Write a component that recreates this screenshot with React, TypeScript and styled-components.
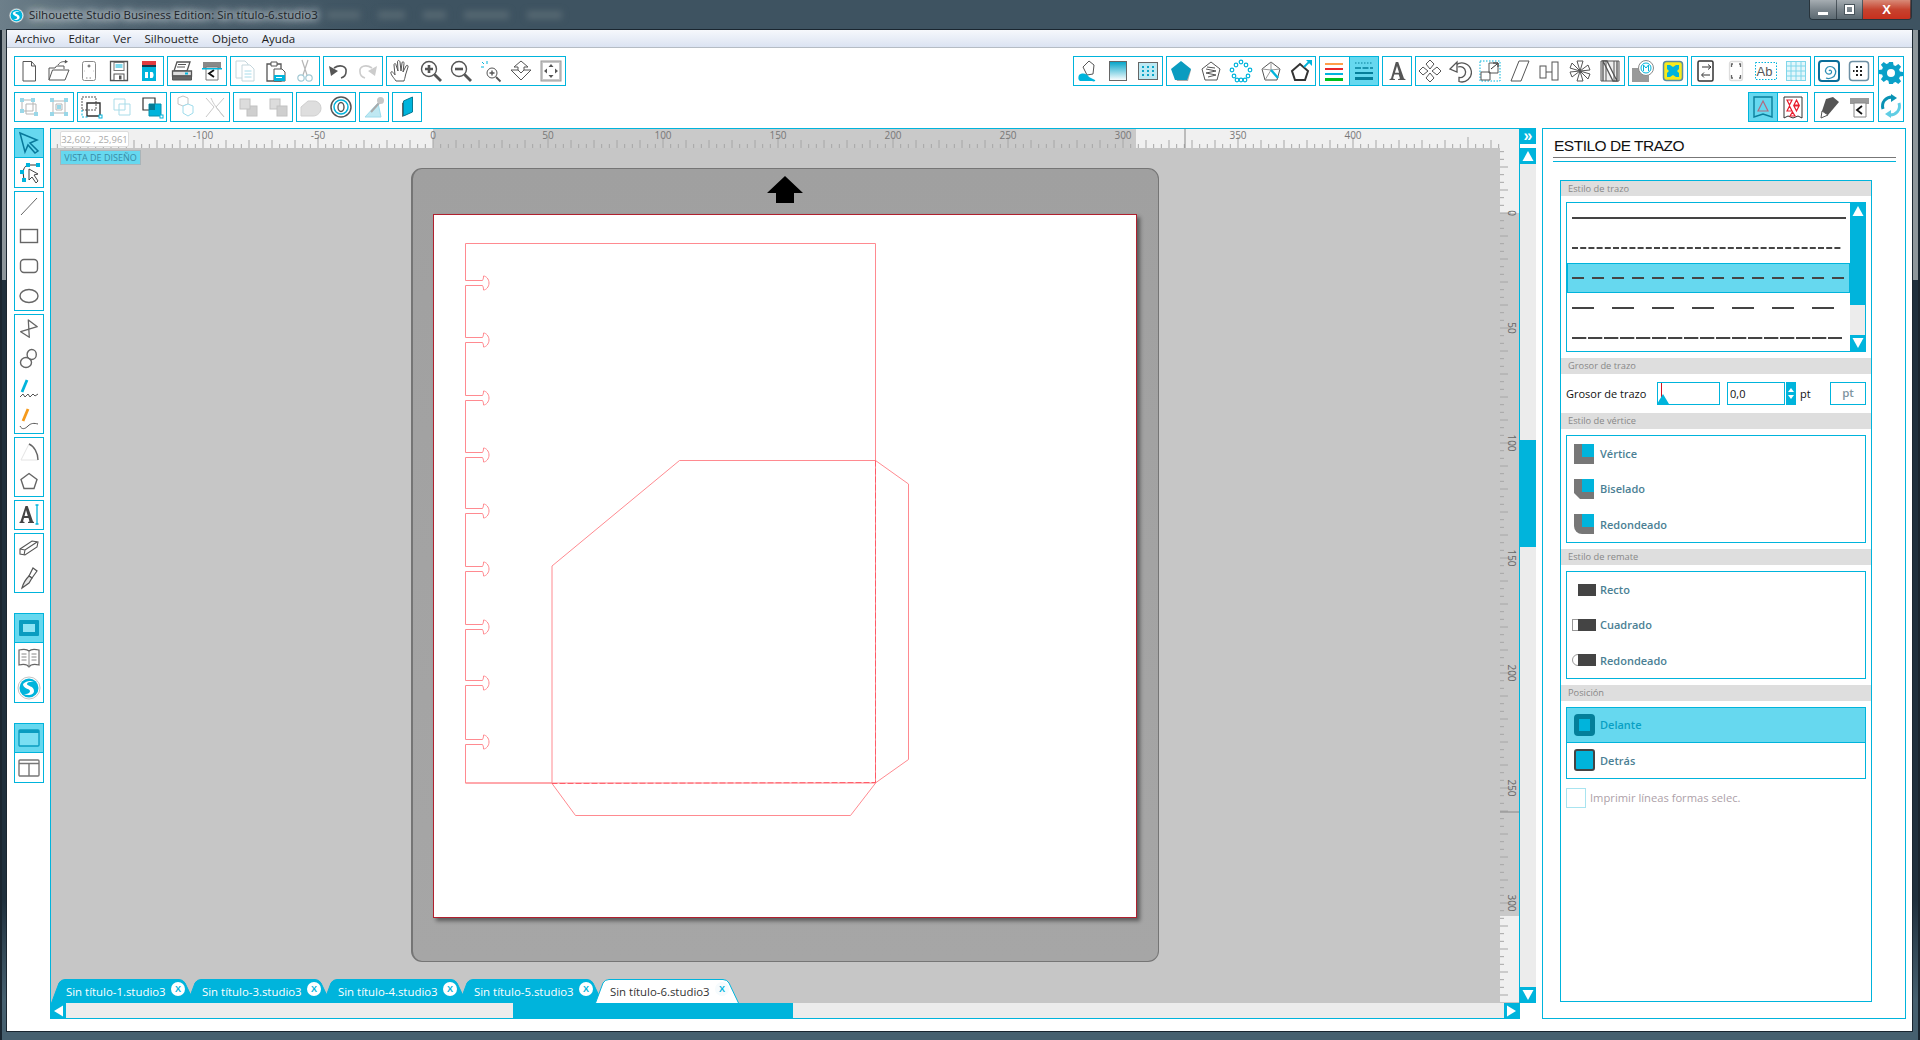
import React from 'react';
import styled, { createGlobalStyle } from 'styled-components';

const CYAN = '#00b4dc';
const ACTIVE = '#66d8ef';
const INK = '#555';
const UI_FONT = '"Open Sans", "Noto Sans", "Liberation Sans", sans-serif';

const Global = createGlobalStyle`
  html, body { margin: 0; padding: 0; background: #3d5260; }
  * { box-sizing: border-box; }
`;

const Window = styled.div`
  width: 1920px;
  height: 1040px;
  overflow: hidden;
  display: flex;
  flex-direction: column;
  font-family: ${UI_FONT};
  background:
    linear-gradient(90deg, #1a2630 0 2px, transparent 2px 1918px, #1a2630 1918px),
    linear-gradient(180deg, #3d5260 0 30px, #8d969b 30px 280px, #1f303d 280px 900px, #46606f 1000px);
`;

const TitleBar = styled.header`
  height: 30px;
  flex: none;
  display: flex;
  align-items: flex-start;
  padding: 0 8px 0 9px;
  background: linear-gradient(90deg, #6d7f8a 0, #4d616e 120px, #3e5361 400px);
`;

const TitleLogo = styled.svg`
  width: 15px;
  height: 15px;
  margin-top: 8px;
  flex: none;
`;

const TitleText = styled.span`
  margin: 7px 0 0 5px;
  font-size: 11.5px;
  line-height: 16px;
  color: #1d2328;
  white-space: nowrap;
  text-shadow: 0 0 6px #e9eef1, 0 0 10px #e9eef1, 0 0 14px #d4dce0;
`;

const GlassBlobs = styled.div`
  display: flex;
  gap: 18px;
  margin: 11px 0 0 9px;
`;

const GlassBlob = styled.span<{ $w: number }>`
  width: ${(p) => p.$w}px;
  height: 8px;
  background: #566872;
  filter: blur(3px);
`;

const WindowButtons = styled.div`
  margin-left: auto;
  display: flex;
  height: 20px;
  border: 1px solid #28343c;
  border-top: none;
  border-radius: 0 0 4px 4px;
  overflow: hidden;
`;

const WindowButton = styled.div<{ $w: number; $close?: boolean }>`
  width: ${(p) => p.$w}px;
  display: flex;
  align-items: center;
  justify-content: center;
  color: #fff;
  font-family: "Liberation Sans", sans-serif;
  font-size: 13px;
  font-weight: 700;
  border-right: 1px solid rgba(30, 40, 48, 0.6);
  background: ${(p) =>
    p.$close
      ? 'linear-gradient(180deg, #d88a78 0, #c6432f 50%, #c8301e 100%)'
      : 'linear-gradient(180deg, #a6adb2 0, #7b858c 50%, #5b6971 100%)'};
`;

const MinGlyph = styled.span`
  width: 10px;
  height: 3px;
  margin-top: 7px;
  background: #fff;
`;

const MaxGlyph = styled.span`
  width: 9px;
  height: 9px;
  border: 2px solid #fff;
  outline: 1px solid #49555c;
`;

const Client = styled.main`
  flex: 1;
  min-height: 0;
  margin: 0 8px 9px 7px;
  background: #fff;
  display: flex;
  flex-direction: column;
  box-shadow: 0 0 0 1px #1a2630;
`;

const MenuBar = styled.nav`
  height: 18px;
  flex: none;
  display: flex;
  gap: 13.3px;
  padding-left: 8px;
  align-items: center;
  background: linear-gradient(180deg, #f6f8fc 0, #dbe3f2 100%);
  border-bottom: 1px solid #b5bcc4;
  font-size: 11.5px;
  color: #1b1b1b;
`;

const ToolbarArea = styled.section`
  flex: none;
  display: flex;
  justify-content: space-between;
  padding: 8px 8px 0 7px;
`;

const ToolRows = styled.div`
  display: flex;
  flex-direction: column;
  gap: 6px;
`;

const ToolRow = styled.div<{ $end?: boolean }>`
  display: flex;
  gap: 3px;
  justify-content: ${(p) => (p.$end ? 'flex-end' : 'flex-start')};
`;

const ToolRight = styled.div`
  display: flex;
  gap: 4px;
`;

const ToolGroup = styled.div<{ $col?: boolean; $mt?: number; $ml?: number }>`
  display: flex;
  flex-direction: ${(p) => (p.$col ? 'column' : 'row')};
  box-shadow: inset 0 0 0 1px ${CYAN};
  margin-top: ${(p) => p.$mt ?? 0}px;
  margin-left: ${(p) => p.$ml ?? 0}px;
  width: fit-content;
`;

const ToolButton = styled.div<{ $active?: boolean; $w?: number; $h?: number }>`
  width: ${(p) => p.$w ?? 30}px;
  height: ${(p) => p.$h ?? 30}px;
  flex: none;
  display: flex;
  align-items: center;
  justify-content: center;
  background: ${(p) => (p.$active ? ACTIVE : 'transparent')};
  box-shadow: ${(p) => (p.$active ? `inset 0 0 0 1px ${CYAN}` : 'none')};
`;

const Glyph = styled.svg`
  width: 24px;
  height: 24px;
  display: block;
`;

const Workspace = styled.div`
  flex: 1;
  min-height: 0;
  display: flex;
  gap: 6px;
  padding: 6px 6px 12px 7px;
`;

const ToolColumn = styled.aside`
  width: 30px;
  flex: none;
  display: flex;
  flex-direction: column;
  gap: 3px;
`;

const Editor = styled.div`
  width: 1486px;
  flex: none;
  display: flex;
  flex-direction: column;
`;

const EditorTop = styled.div`
  flex: 1;
  min-height: 0;
  display: flex;
`;

const Stage = styled.div`
  flex: 1;
  min-width: 0;
  display: flex;
  flex-direction: column;
  position: relative;
  background: #c6c6c6;
  border-left: 1px solid ${CYAN};
  border-top: 1px solid ${CYAN};
`;

const RulerSvg = styled.svg`
  display: block;
  flex: none;
`;

const StageBody = styled.div`
  flex: 1;
  min-height: 0;
  display: flex;
`;

const DesignColumn = styled.div`
  flex: 1;
  min-width: 0;
  display: flex;
  flex-direction: column;
`;

const Surface = styled.div`
  flex: 1;
  min-height: 0;
  position: relative;
`;

const Coords = styled.div`
  position: absolute;
  left: 9px;
  top: 2px;
  width: 69px;
  height: 16px;
  background: #fff;
  border: 1px solid #ddd;
  border-radius: 2px;
  font-size: 9.5px;
  line-height: 15px;
  text-align: center;
  color: #aaa;
  white-space: nowrap;
`;

const ViewBadge = styled.div`
  position: absolute;
  left: 9px;
  top: 2px;
  width: 81px;
  height: 15px;
  background: ${ACTIVE};
  border: 1px solid #a9b4b8;
  font-size: 9px;
  line-height: 13px;
  text-align: center;
  color: #3a8ba5;
  white-space: nowrap;
`;

const Mat = styled.div`
  position: absolute;
  left: 360px;
  top: 20px;
  width: 748px;
  height: 794px;
  border-radius: 11px;
  background: linear-gradient(180deg, #a0a0a0 0, #a6a6a6 100%);
  border: 1px solid #757575;
  border-left-width: 2px;
`;

const MatArrow = styled.svg`
  position: absolute;
  left: 354px;
  top: 7px;
  width: 36px;
  height: 27px;
`;

const Paper = styled.div`
  position: absolute;
  left: 20px;
  top: 45px;
  width: 704px;
  height: 704px;
  background: #fff;
  border: 1px solid #b0202e;
  box-shadow: 3px 3px 4px rgba(0, 0, 0, 0.45);
`;

const PaperDrawing = styled.svg`
  display: block;
  width: 702px;
  height: 702px;
`;

const TabStrip = styled.div`
  height: 24px;
  flex: none;
  display: flex;
`;

const Tab = styled.div<{ $active?: boolean }>`
  position: relative;
  z-index: ${(p) => (p.$active ? 1 : 0)};
  width: 144px;
  height: 24px;
  flex: none;
  margin-right: -8px;
  padding: 5px 0 0 15px;
  font-size: 11.4px;
  line-height: 16px;
  white-space: nowrap;
  color: ${(p) => (p.$active ? '#333' : '#fff')};
`;

const TabShape = styled.svg`
  position: absolute;
  left: 0;
  top: 0;
  z-index: -1;
`;

const TabClose = styled.span<{ $active?: boolean }>`
  position: absolute;
  left: 120px;
  top: 3px;
  width: 14px;
  height: 14px;
  border-radius: 50%;
  background: ${(p) => (p.$active ? '#f6fbfd' : '#fff')};
  color: ${CYAN};
  font-family: "Liberation Sans", sans-serif;
  font-size: 9px;
  font-weight: 700;
  line-height: 14px;
  text-align: center;
`;

const VScroll = styled.div`
  width: 17px;
  flex: none;
  display: flex;
  flex-direction: column;
  border-left: 1px solid ${CYAN};
`;

const ScrollBtn = styled.div`
  flex: none;
  width: 16px;
  height: 16px;
  background: ${CYAN};
  display: flex;
  align-items: center;
  justify-content: center;
`;

const CollapseBtn = styled(ScrollBtn)`
  margin-bottom: 4px;
  color: #fff;
  font-family: "Liberation Sans", sans-serif;
  font-size: 16px;
  font-weight: 700;
  line-height: 14px;
`;

const Track = styled.div<{ $flex?: number; $h?: number; $w?: number }>`
  background: #ececec;
  flex: ${(p) => p.$flex ?? '0 0 auto'};
  height: ${(p) => (p.$h ? `${p.$h}px` : 'auto')};
  width: ${(p) => (p.$w ? `${p.$w}px` : 'auto')};
`;

const Thumb = styled.div<{ $h?: number; $w?: number }>`
  background: ${CYAN};
  flex: none;
  height: ${(p) => (p.$h ? `${p.$h}px` : 'auto')};
  width: ${(p) => (p.$w ? `${p.$w}px` : 'auto')};
`;

const HScroll = styled.div`
  height: 16px;
  flex: none;
  width: 1470px;
  display: flex;
  border-bottom: 1px solid ${CYAN};
`;

const Arrow = styled.svg`
  width: 12px;
  height: 12px;
  display: block;
`;

const SidePanel = styled.aside`
  width: 364px;
  flex: none;
  border: 1px solid ${CYAN};
  display: flex;
  flex-direction: column;
  padding: 0 0 16px 17px;
`;

const PanelTitle = styled.h2`
  margin: 9px 9px 0 -7px;
  height: 20px;
  flex: none;
  font-family: "Liberation Sans", sans-serif;
  font-size: 15.5px;
  line-height: 16px;
  letter-spacing: -0.5px;
  font-weight: 400;
  color: #111;
  padding-left: 1px;
  border-bottom: 1px solid #777;
`;

const TitleRule = styled.div`
  height: 1px;
  margin: 3px 9px 0 -7px;
  background: ${CYAN};
  flex: none;
`;

const Inner = styled.div`
  flex: 1;
  width: 312px;
  margin-top: 18px;
  border: 1px solid ${CYAN};
  display: flex;
  flex-direction: column;
`;

const SectionHead = styled.div<{ $h?: number }>`
  height: ${(p) => p.$h ?? 16}px;
  flex: none;
  background: #dedede;
  padding-left: 7px;
  font-size: 9.3px;
  line-height: 16px;
  color: #888;
`;

const StyleList = styled.div`
  position: relative;
  height: 150px;
  margin: 6px 5px;
  border: 1px solid ${CYAN};
  overflow: hidden;
  display: flex;
`;

const StyleRows = styled.div`
  flex: 1;
`;

const StyleRow = styled.div<{ $active?: boolean }>`
  height: 30px;
  display: flex;
  align-items: center;
  padding-left: 5px;
  background: ${(p) => (p.$active ? ACTIVE : '#fff')};
  box-shadow: ${(p) => (p.$active ? `inset 0 0 0 1px ${CYAN}` : 'none')};
`;

const ListScroll = styled.div`
  width: 15px;
  flex: none;
  display: flex;
  flex-direction: column;
`;

const ListArrow = styled(ScrollBtn)`
  width: 15px;
`;

const WeightRow = styled.div`
  height: 39px;
  flex: none;
  display: flex;
  align-items: center;
  padding: 0 5px;
  font-size: 11px;
  color: #111;
`;

const WeightLabel = styled.span`
  width: 91px;
  white-space: nowrap;
`;

const SliderBox = styled.div`
  position: relative;
  width: 63px;
  height: 23px;
  border: 1px solid ${CYAN};
`;

const SliderNeedle = styled.span`
  position: absolute;
  left: 3px;
  top: 0;
  width: 1px;
  height: 14px;
  background: #d01020;
`;

const SliderHandle = styled.span`
  position: absolute;
  left: -1px;
  bottom: 0;
  width: 0;
  height: 0;
  border-left: 6px solid transparent;
  border-right: 6px solid transparent;
  border-bottom: 10px solid ${CYAN};
`;

const NumberBox = styled.div`
  width: 58px;
  height: 23px;
  margin-left: 7px;
  border: 1px solid ${CYAN};
  padding-left: 2px;
  line-height: 22px;
`;

const Spinner = styled.div`
  width: 10px;
  height: 23px;
  margin-left: 1px;
  background: ${CYAN};
  display: flex;
  flex-direction: column;
  align-items: center;
  justify-content: center;
  gap: 3px;
`;

const SpinUp = styled.span`
  border-left: 3px solid transparent;
  border-right: 3px solid transparent;
  border-bottom: 4px solid #fff;
`;

const SpinDown = styled(SpinUp)`
  border-bottom: none;
  border-top: 4px solid #fff;
`;

const UnitText = styled.span`
  margin-left: 4px;
`;

const UnitButton = styled.div`
  margin-left: auto;
  width: 36px;
  height: 23px;
  border: 1px solid ${CYAN};
  color: #7e959f;
  font-size: 11.5px;
  font-weight: 600;
  text-align: center;
  line-height: 19px;
`;

const OptionBox = styled.div`
  margin: 6px 5px;
  border: 1px solid ${CYAN};
`;

const Option = styled.div<{ $active?: boolean; $h?: number }>`
  height: ${(p) => p.$h ?? 35.3}px;
  display: flex;
  align-items: center;
  gap: 4px;
  padding-left: 5px;
  background: ${(p) => (p.$active ? ACTIVE : 'transparent')};
  border-bottom: ${(p) => (p.$active ? `1px solid ${CYAN}` : 'none')};
  font-size: 11px;
  font-weight: 600;
  color: ${(p) => (p.$active ? '#08a0c4' : '#4b7f94')};
`;

const OptionIcon = styled.svg`
  width: 24px;
  height: 24px;
  flex: none;
`;

const PrintRow = styled.div`
  display: flex;
  align-items: center;
  gap: 4px;
  margin: 3px 5px 0;
  font-size: 11.2px;
  color: #ad9fa8;
`;

const CheckBox = styled.span`
  width: 20px;
  height: 20px;
  flex: none;
  border: 1px solid #a8e4f0;
`;

const Icons: Record<string, React.ReactNode> = {
  new: <path d="M6 2.500h8.500l4 4.500v15H6zM14.500 2.500V7h4" fill="#fff" stroke={INK} />,
  open: (
    <g fill="#fff" stroke={INK}>
      <path d="M2 21V9h6l1.500-2H17v3" />
      <path d="M2 21l3.500-10H22l-4 10z" />
      <path d="M11 6c2-3 5-4 8-3" fill="none" />
      <path d="M18 .8l3 2-3.200 1.600z" fill={INK} stroke="none" />
    </g>
  ),
  mat: (
    <g fill="none" stroke="#888">
      <rect x="5.500" y="2.500" width="13" height="19" rx="2" />
      <path d="M12 5.500v3M10.500 7h3" stroke={INK} />
      <path d="M7 12h.5M16.500 12h.5M9 19h6" strokeDasharray="1.500 2" />
    </g>
  ),
  save: (
    <g fill="#fff" stroke={INK}>
      <path d="M3.500 2.500h17v19h-17z" strokeWidth="1.300" />
      <rect x="7" y="3.500" width="10" height="8" stroke="#777" />
      <path d="M8.500 6h7M8.500 8h7" stroke={CYAN} />
      <rect x="7" y="15" width="10" height="6.500" />
      <rect x="12" y="16.500" width="2.500" height="4" fill={INK} stroke="none" />
    </g>
  ),
  card: (
    <g>
      <path d="M5 2h10l4 4v16H5z" fill={CYAN} />
      <rect x="5" y="2" width="14" height="4" fill="#e03a3e" />
      <rect x="5" y="6" width="14" height="2" fill="#103a50" />
      <path d="M8 13h3v6H8zM13 13h2.500l1 2v2l-1 2H13z" fill="#fff" />
    </g>
  ),
  print: (
    <g stroke={INK} fill="#fff">
      <path d="M7 3h13l-3 9H4z" strokeWidth="1.300" />
      <path d="M8 5.500h8M7 8h8" />
      <path d="M2.500 12h19v5h-19z" fill="#ddd" strokeWidth="1.300" />
      <path d="M2.500 17h19v4h-19z" fill="#666" />
      <rect x="15" y="13.500" width="3" height="2" fill={CYAN} stroke="none" />
    </g>
  ),
  send: (
    <g>
      <path d="M3 3h18v7H3z" fill="#888" />
      <path d="M6 8h12v13H6z" fill="#fff" stroke="#777" />
      <path d="M14 11l-5 3.500 5 3.500" fill="none" stroke="#111" strokeWidth="1.800" />
      <rect x="2" y="9" width="20" height="1.500" fill={CYAN} />
    </g>
  ),
  copy: (
    <g fill="#fff" stroke="#c5d6dc">
      <path d="M3 2h9l3 3v14H3z" />
      <path d="M9 6h8l4 4v12H9z" />
      <path d="M11.500 12h7M11.500 15h7M11.500 18h7" stroke="#a8dcea" />
    </g>
  ),
  paste: (
    <g>
      <path d="M4 5h14v17H4z" fill="#fff" stroke={INK} strokeWidth="1.300" />
      <path d="M8 3h6v4H8z" fill="#fff" stroke={INK} />
      <path d="M11 10h8l3 3v9H11z" fill="#fff" stroke={INK} />
      <path d="M11 16h11v6H11z" fill={CYAN} />
      <path d="M13 18.500h6" stroke="#fff" />
    </g>
  ),
  cut: (
    <g fill="none" stroke="#a3c9d4" strokeWidth="1.200">
      <path d="M9 1l5 15M15 1l-5 15" stroke="#b5b5b5" />
      <circle cx="8" cy="19" r="3.200" />
      <circle cx="16" cy="19" r="3.200" />
    </g>
  ),
  undo: (
    <g>
      <path d="M8 9c6-4 13-2 12 4 0 3-2 5-5 6" fill="none" stroke={INK} strokeWidth="1.600" />
      <path d="M3 7l2 10 7-5z" fill={INK} />
    </g>
  ),
  redo: (
    <g>
      <path d="M16 9c-6-4-13-2-12 4 0 3 2 5 5 6" fill="none" stroke="#ccc" strokeWidth="1.600" />
      <path d="M21 7l-2 10-7-5z" fill="#ccc" />
    </g>
  ),
  hand: (
    <path
      d="M7 22c-2-3-6-7-5-9 1-1 3 1 4 3L5 6c0-2 2-2 2 0l2 6-.5-9c0-2 2-2 2.500 0l1 9 1-8c.2-2 2.200-1.500 2 .5L14 13l3-6c1-1.500 2.500-.500 2 1l-2.500 8c-.5 3-1 4-1.500 6z"
      fill="#fff"
      stroke={INK}
    />
  ),
  zoomIn: (
    <g fill="none" stroke={INK}>
      <circle cx="10" cy="10" r="7.500" strokeWidth="1.400" fill="#fff" />
      <path d="M6 10h8M10 6v8" strokeWidth="2.600" />
      <path d="M15.500 15.500l6.500 6.500" strokeWidth="2.800" />
    </g>
  ),
  zoomOut: (
    <g fill="none" stroke={INK}>
      <circle cx="10" cy="10" r="7.500" strokeWidth="1.400" fill="#fff" />
      <path d="M6 10h8" strokeWidth="2.600" />
      <path d="M15.500 15.500l6.500 6.500" strokeWidth="2.800" />
    </g>
  ),
  zoomSel: (
    <g fill="none" stroke={INK}>
      <circle cx="13" cy="14" r="5" fill="#fff" />
      <path d="M10.500 14h5M13 11.500v5" strokeWidth="1.400" />
      <path d="M17 18l4.500 4.500" strokeWidth="1.800" />
      <path d="M3 3l2 2M8 2v3M2 8h3" stroke={CYAN} />
    </g>
  ),
  pan: (
    <g fill="#fff" stroke={INK}>
      <path d="M12 2l7 6h-4v3h7L12 21 2 11h7V8H5z" />
      <path d="M9 11l3 3 3-3" fill="none" />
    </g>
  ),
  fit: (
    <g>
      <rect x="2" y="2" width="20" height="20" fill="#c9c9c9" stroke="#999" />
      <rect x="4" y="4" width="16" height="16" fill="#fff" />
      <path d="M12 5l2.500 3h-5zM12 19l2.500-3h-5zM5 12l3-2.500v5zM19 12l-3-2.500v5z" fill="#555" />
    </g>
  ),
  group: (
    <g stroke="#b5b5b5" fill="none">
      <path d="M5 5h11v11H5zM9 9h10v10H9z" />
      <path d="M3 3h4v4H3zM14 3h4v4h-4zM3 14h4v4H3zM17 17h4v4h-4z" fill="#9ad7e8" stroke="none" />
    </g>
  ),
  ungroup: (
    <g stroke="#b5b5b5" fill="none">
      <path d="M6 6h12v12H6zM9 9h6v6H9z" />
      <path d="M3 3h4v4H3zM17 3h4v4h-4zM3 17h4v4H3zM17 17h4v4h-4zM10 10h4v4h-4z" fill="#9ad7e8" stroke="none" />
    </g>
  ),
  weld: (
    <g fill="none">
      <path d="M2 2h14v13H2z" stroke="#555" strokeDasharray="2 1" />
      <path d="M7 8h13v13H7z" stroke="#333" strokeWidth="1.400" />
      <path d="M2 15v7h7" stroke={CYAN} strokeDasharray="2 1.500" />
      <rect x="19" y="20" width="3" height="3" stroke={CYAN} fill="#fff" />
    </g>
  ),
  overlap: <path d="M4 4h11v11H4zM9 9h11v11H9z" fill="#fff" stroke="#a9dce9" />,
  front: (
    <g>
      <path d="M3 3h12v12H3z" fill="#fff" stroke="#333" strokeWidth="1.200" />
      <path d="M9 9h12v12H9z" fill={CYAN} stroke="#0890ad" />
      <path d="M9 9h6v6H9z" fill="#067b95" />
      <rect x="20" y="20" width="3" height="3" fill="#fff" stroke={CYAN} />
    </g>
  ),
  cubes: (
    <g fill="#fff" stroke="#b5ccd4">
      <path d="M5 3l5-2 5 2v6l-5 2-5-2z" stroke="#c4c4c4" />
      <path d="M10 11l5-2 5 2v7l-5 3-5-3z" stroke="#9edcec" />
    </g>
  ),
  cross: <path d="M3 3l8 9-8 10M21 3l-8 9 8 10M8 3c3 7 5 9 13 19" fill="none" stroke="#c9c9c9" />,
  arrFront: (
    <g fill="#dcdcdc" stroke="#c2c2c2">
      <rect x="11" y="11" width="10" height="10" fill="#cfcfcf" />
      <rect x="4" y="4" width="10" height="10" />
    </g>
  ),
  arrBack: (
    <g fill="#dcdcdc" stroke="#c2c2c2">
      <rect x="4" y="4" width="10" height="10" />
      <rect x="11" y="11" width="10" height="10" fill="#cfcfcf" />
    </g>
  ),
  blob: <path d="M2 21V12l7-6h5a7 7 0 0 1 8 7c0 4-3 8-8 8z" fill="#dedede" stroke="#cfcfcf" />,
  offset: (
    <g fill="#fff" stroke={INK}>
      <circle cx="12" cy="12" r="10" strokeWidth="1.500" />
      <circle cx="12" cy="12" r="7" stroke={CYAN} strokeWidth="1.500" />
      <ellipse cx="12" cy="12" rx="3" ry="4.500" strokeWidth="1.400" />
    </g>
  ),
  mirror: (
    <g>
      <path d="M3 22L16 8l3 14z" fill="#bfe8f2" stroke="#9edcec" />
      <path d="M9 17L18 7" stroke="#aaa" strokeWidth="2" />
      <circle cx="18.500" cy="5.500" r="3.500" fill="#c6c6c6" />
    </g>
  ),
  book3d: (
    <g>
      <path d="M7 8l9-5v14l-9 5z" fill="#666" />
      <path d="M8.500 6l9-4v15l-9 4z" fill={CYAN} stroke="#067b95" />
    </g>
  ),
  bucket: (
    <g>
      <path d="M7 8l6-6 5 4-1 9-6 1z" fill="#fff" stroke={INK} />
      <path d="M3 16c4-3 8-1 10 2l6 3c1 1-1 2-3 1H4c-2-1-2-4-1-6z" fill={CYAN} />
    </g>
  ),
  gradient: (
    <g>
      <defs>
        <linearGradient id="fillGrad" x1="0" y1="0" x2="0" y2="1">
          <stop offset="0" stopColor="#00a3c8" />
          <stop offset="1" stopColor="#ffffff" />
        </linearGradient>
      </defs>
      <rect x="3.500" y="2.500" width="17" height="19" fill="url(#fillGrad)" stroke="#666" />
    </g>
  ),
  pattern: (
    <g>
      <rect x="2.500" y="3.500" width="19" height="17" fill="#bdeaf4" stroke="#666" />
      <path
        d="M6 7h2v2H6zM11 7h2v2h-2zM16 7h2v2h-2zM6 11h2v2H6zM11 11h2v2h-2zM16 11h2v2h-2zM6 15h2v2H6zM11 15h2v2h-2zM16 15h2v2h-2z"
        fill="#0aa5c8"
      />
    </g>
  ),
  pentFill: (
    <g>
      <path d="M4 12l9-9 9 8-3 11H8z" fill="#aaa" />
      <path d="M2 10l10-8 10 8-4 11H6z" fill="#0a9cc0" />
    </g>
  ),
  pentLines: (
    <g stroke={INK} fill="#fff">
      <path d="M3 10l9-7 9 7-3 11H6z" />
      <path d="M7 10l10 2-10 2 10 2-8 2M8 8l8 1" fill="none" />
    </g>
  ),
  pentDots: (
    <g fill="#fff" stroke={CYAN} strokeWidth="1.200">
      <circle cx="12" cy="3" r="1.800" />
      <circle cx="7" cy="6" r="1.800" />
      <circle cx="17" cy="6" r="1.800" />
      <circle cx="3" cy="11" r="1.800" />
      <circle cx="21" cy="11" r="1.800" />
      <circle cx="5" cy="17" r="1.800" />
      <circle cx="19" cy="17" r="1.800" />
      <circle cx="8" cy="21" r="1.800" />
      <circle cx="12" cy="21" r="1.800" />
      <circle cx="16" cy="21" r="1.800" />
    </g>
  ),
  pentKnife: (
    <g fill="#fff" stroke={INK}>
      <path d="M3 10l9-7 9 7-3 11H6z" />
      <path d="M12 3v8M3 10l9 1 9-1M12 11l-6 10" fill="none" stroke="#999" />
      <path d="M12 11l7 8" stroke={CYAN} strokeWidth="2.400" />
    </g>
  ),
  pentArrow: (
    <g>
      <path d="M3 12l8-7 8 7-3 9H6z" fill="#fff" stroke="#333" strokeWidth="2" />
      <path d="M15 8l6-6" stroke={CYAN} strokeWidth="1.800" />
      <path d="M17 1h6v6z" fill={CYAN} />
    </g>
  ),
  lineColor: (
    <g>
      <rect x="3" y="4" width="18" height="2" fill="#ff9d4a" />
      <rect x="3" y="9" width="18" height="2" fill="#e8262a" />
      <rect x="3" y="14" width="18" height="2" fill={CYAN} />
      <rect x="3" y="19" width="18" height="3" fill="#00c020" />
    </g>
  ),
  lineStyle: (
    <g stroke="#057e9a" fill="none">
      <path d="M3 4h18" strokeDasharray="1.500 1.500" strokeWidth="1.200" />
      <path d="M3 9h18" strokeDasharray="6 1.500" strokeWidth="1.600" />
      <path d="M3 14h18" strokeWidth="2" />
      <path d="M3 19.500h18" strokeWidth="3" />
    </g>
  ),
  fontA: (
    <path d="M10.800 3h2.400L19 19.500l1.500.7V21H13v-.8l2-.7-1.300-4H9.300L8 19.500l2 .7v.8H4.500v-.8l1.500-.7zM12 7l-2.100 6.800h4.200z" fill="#555" />
  ),
  move: (
    <g fill="#fff" stroke={INK}>
      <path d="M12 1l4 4-4 5-4-5zM12 23l4-4-4-5-4 5zM1 12l4-4 5 4-5 4zM23 12l-4-4-5 4 5 4z" />
    </g>
  ),
  rotate: (
    <g fill="none" stroke={INK} strokeWidth="1.300">
      <path d="M8 6a9.500 9.500 0 1 1 3 16.500v-4a5.500 5.500 0 1 0-1-10.500" />
      <path d="M2 10l7-7v10z" fill="#fff" />
    </g>
  ),
  scale: (
    <g fill="none">
      <path d="M2 2h20v20H2z" stroke={CYAN} strokeDasharray="1.500 1.500" />
      <path d="M11 4h9v10h-9zM3 13h9v8H3z" stroke={INK} fill="#fff" />
      <path d="M13 10l6-5M15 4h5v4" stroke="#333" />
    </g>
  ),
  shear: <path d="M11 2h10L13 22H3z" fill="#fff" stroke={INK} />,
  align: (
    <g fill="#fff" stroke={INK}>
      <rect x="2" y="7" width="6" height="12" />
      <rect x="14" y="3" width="6" height="18" />
      <path d="M8 13h6" />
    </g>
  ),
  flower: (
    <g fill="#fff" stroke={INK}>
      <path d="M12 12L9 2h6zM12 12l8-6 2 5zM12 12l10 3-2 5zM12 12l3 10H9zM12 12l-8 6-2-5zM12 12L2 9l2-5z" />
    </g>
  ),
  letterN: (
    <g fill="#fff" stroke={INK}>
      <path d="M3 2h18v20H3z" fill="#eee" />
      <path d="M5 2h4l10 20h-4zM5 2v20M19 2v20" strokeWidth="1.300" />
      <path d="M8 2v20M16 2v20" />
    </g>
  ),
  matM: (
    <g>
      <rect x="1" y="9" width="17" height="14" fill="#999" />
      <circle cx="15" cy="9" r="7.500" fill="#fff" stroke="#8a8a8a" />
      <circle cx="15" cy="9" r="5" fill="none" stroke={CYAN} />
      <path d="M12.500 12V6l2.500 3 2.500-3v6" fill="none" stroke={CYAN} />
    </g>
  ),
  matY: (
    <g>
      <rect x="2.500" y="2.500" width="19" height="19" rx="3" fill="#f7ea1c" stroke="#5b8c9f" strokeWidth="1.500" />
      <path d="M6 6h3l3 2 3-2h3v4l-2 2 2 2v4h-3l-3-2-3 2H6v-4l2-2-2-2z" fill={CYAN} />
    </g>
  ),
  pageFlip: (
    <g fill="#fff" stroke="#333">
      <rect x="4" y="2" width="15" height="20" rx="1.500" strokeWidth="1.500" />
      <path d="M8 8h8M14 5.500L17 8l-3 2.500M16 16H8M10 13.500L7.500 16l2.500 2.500" fill="none" />
    </g>
  ),
  crop: (
    <g fill="none" strokeWidth="1.300">
      <rect x="5.500" y="2.500" width="13" height="19" rx="2" stroke="#ddd" />
      <path d="M9 5H7.500v3M15 5h1.500v3M9 19H7.500v-3M15 19h1.500v-3" stroke="#666" />
    </g>
  ),
  textBox: (
    <g>
      <rect x="1.500" y="3.500" width="21" height="17" fill="none" stroke={CYAN} strokeDasharray="1.500 1.500" />
      <text x="2.500" y="17" fontSize="13" fontFamily="Liberation Sans, sans-serif" fill="#555">
        Ab
      </text>
    </g>
  ),
  grid: (
    <g stroke="#7fd6ea" fill="#e4f7fb">
      <rect x="2.500" y="2.500" width="19" height="19" />
      <path d="M7 2.500v19M12 2.500v19M17 2.500v19M2.500 7h19M2.500 12h19M2.500 17h19" fill="none" />
    </g>
  ),
  spiral: (
    <g fill="none">
      <rect x="2" y="2" width="20" height="20" rx="3" stroke="#0a6d99" strokeWidth="2" />
      <path d="M12 12c1-1.500 3-.5 2.500 1.500s-4 2.500-5.500 0 .5-6 4-6 6.500 3 5.500 7-6 6-9.500 4.500" stroke="#2b8db3" strokeWidth="1.200" />
    </g>
  ),
  dots: (
    <g>
      <rect x="2.500" y="2.500" width="19" height="19" rx="3" fill="#fff" stroke="#6d8fa3" strokeWidth="1.500" />
      <path
        d="M9 7h2v2H9zM13 7h2v2h-2zM9 11h2v2H9zM13 11h2v2h-2zM9 15h2v2H9zM13 15h2v2h-2zM6 11h1.500v2H6z"
        fill="#222"
      />
    </g>
  ),
  gear: (
    <path
      fillRule="evenodd"
      d="M10 1h4l.6 3.200 2 .8L19.300 3l2.800 2.800-2 2.700.8 2 3.100.5v4l-3.100.6-.8 2 2 2.600-2.800 2.800-2.700-2-2 .8L14 23h-4l-.6-3.200-2-.8-2.700 2L1.900 18.200l2-2.600-.8-2L0 13V9l3.100-.5.8-2-2-2.700L4.700 1l2.700 2 2-.8zM12 8a4 4 0 1 0 0 8 4 4 0 0 0 0-8z"
      fill="#0aa0c8"
    />
  ),
  refresh: (
    <g fill="none" strokeWidth="3">
      <path d="M4 15C2 8 7 3 13 3" stroke="#0892b4" />
      <path d="M20 9c2 7-3 12-9 12" stroke="#60cde4" />
      <path d="M12 0l6 4-6 4z" fill="#0892b4" />
      <path d="M12 24l-6-4 6-4z" fill="#60cde4" />
    </g>
  ),
  trace: (
    <g fill="none">
      <path d="M3 2h18v20l-9-3-9 3z" fill="#66d8ef" stroke="#0a7f9c" strokeWidth="1.400" />
      <path d="M12 6l5 10H7z" stroke="#b06a80" strokeWidth="1.200" />
    </g>
  ),
  traceRed: (
    <g fill="none">
      <path d="M3 2h18v21l-4-2-5 2-5-2-4 2z" fill="#fff" stroke="#333" />
      <path d="M6 5h5l-2.500 5zM13 10l2.500-5 2.500 5zM6 16l2.500-5 2.500 5zM13 11h5l-2.500 5zM9 21l2.500-4 2.500 4z" stroke="#e81c2c" strokeWidth="1.200" />
    </g>
  ),
  pen: (
    <g>
      <path d="M9 4l7-2 6 5-11 13-6-4z" fill="#555" />
      <path d="M5 16l6 4-7 3z" fill="#fff" stroke="#555" />
    </g>
  ),
  sendSmall: (
    <g>
      <path d="M3 3h19v6H3z" fill="#9a9a9a" />
      <path d="M7 8h12v14H7z" fill="#fff" stroke="#888" />
      <path d="M15 11l-5 4 5 4" fill="none" stroke="#111" strokeWidth="1.800" />
    </g>
  ),
  select: <path d="M3 2l17 7-7 3 8 8-3 2-7-8-3 7z" fill="#66d8ef" stroke="#08789a" strokeWidth="1.500" />,
  node: (
    <g>
      <path d="M6 11C7 6 9 4 12 4h8M6 11l1 8" fill="none" stroke="#333" />
      <path d="M9 2h4v4H9zM19 2h4v4h-4zM3 9h4v4H3zM5 17h4v4H5z" fill={CYAN} />
      <path d="M12 8l9 5-4 1 4 6-2 2-4-6-3 3z" fill="#fff" stroke="#444" />
    </g>
  ),
  line: <path d="M4 21L20 4" stroke="#666" />,
  rect: <rect x="3.500" y="5.500" width="17" height="13" fill="none" stroke="#666" strokeWidth="1.400" />,
  rrect: <rect x="3.500" y="5.500" width="17" height="13" rx="3.500" fill="none" stroke="#666" strokeWidth="1.400" />,
  oval: <ellipse cx="12" cy="12" rx="9" ry="6.500" fill="none" stroke="#666" strokeWidth="1.400" />,
  bezier: <path d="M11.300 3L20.300 9.700L3.700 14.700L12.300 20.300Z" fill="none" stroke="#666" strokeWidth="1.300" strokeLinejoin="round" />,
  curve: (
    <g fill="none" stroke="#666" strokeWidth="1.400">
      <ellipse cx="14.700" cy="7.500" rx="4.600" ry="5" />
      <ellipse cx="9" cy="15.500" rx="5.500" ry="5" />
    </g>
  ),
  pencilC: (
    <g fill="none">
      <path d="M5 15L10 3" stroke={CYAN} strokeWidth="2.800" />
      <path d="M3 20l3-3 2 3 3-3 2 3 3-3 2 2 3-2" stroke="#555" />
    </g>
  ),
  pencilO: (
    <g fill="none">
      <path d="M6 14L11 2" stroke="#f59a1c" strokeWidth="2.800" />
      <path d="M3 19c2 4 5 3 8 0s6-3 10-2" stroke="#555" />
    </g>
  ),
  arc: (
    <g fill="none">
      <path d="M4 20h17M4 20L12 4" stroke="#e4e4e4" />
      <path d="M12 4c5 2 9 9 9 16" stroke="#666" strokeWidth="1.400" />
    </g>
  ),
  polygon: <path d="M12 3.500l8 6-3 9H7l-3-9z" fill="none" stroke="#666" strokeWidth="1.400" />,
  textTool: (
    <g>
      <path d="M8.500 3h2.200L16 18.500l1 .5v1h-6v-1l1.500-.5-1-3.500H7l-1 3.500 1.500.5v1H2.500v-1l1-.5zM9 7l-1.500 6h3.300z" fill="#444" />
      <path d="M20 2v19M18.500 2h3M18.500 21h3" stroke={CYAN} strokeWidth="1.300" />
    </g>
  ),
  eraser: (
    <g fill="#fff" stroke="#555" strokeWidth="1.100">
      <path d="M3 13l12-8 6 1-1 5-12 8-5-1z" />
      <path d="M3 13l5 1 12-8M8 14l-1 5" fill="none" />
    </g>
  ),
  knife: (
    <g fill="#fff" stroke="#555" strokeWidth="1.200">
      <path d="M16 2l4 3-5 7-3-2z" />
      <path d="M12 10l3 2-3 5-7 5c1-4 3-8 7-12z" fill="#e8e8e8" />
    </g>
  ),
  matView: (
    <g>
      <rect x="2" y="4" width="20" height="16" rx="1" fill="#0a9cc0" />
      <rect x="6" y="8" width="12" height="8" fill="#8fe4f5" />
    </g>
  ),
  book: (
    <g fill="#fff" stroke="#666">
      <path d="M2 4c4-1 8-1 10 1 2-2 6-2 10-1v15c-4-1-8-1-10 2-2-3-6-3-10-2z" strokeWidth="1.200" />
      <path d="M12 5v16M4.500 8h5M4.500 11h5M4.500 14h5M14.500 8h5M14.500 11h5M14.500 14h5" fill="none" stroke="#888" />
    </g>
  ),
  sLogo: (
    <g>
      <circle cx="12" cy="12" r="11" fill="#fff" stroke="#c4c4c4" />
      <circle cx="12" cy="12" r="9.500" fill={CYAN} />
      <path d="M6 8c3-3 8-4 11-2-3-.5-7 0-7 2 0 2 7 2 7 7 0 4-6 5-10 3 3 0 6-.5 6-3s-7-2-7-7z" fill="#fff" />
    </g>
  ),
  winActive: (
    <g>
      <rect x="2" y="4" width="20" height="16" rx="1" fill="#7adff3" stroke="#0a9cc0" strokeWidth="1.400" />
      <rect x="2" y="4" width="20" height="3" fill="#0a9cc0" />
    </g>
  ),
  winSplit: (
    <g fill="none" stroke="#777" strokeWidth="1.400">
      <rect x="2" y="4" width="20" height="16" rx="1" />
      <path d="M2 7.500h20M12 7.500V20" />
    </g>
  ),
};

const ACTIVE_TOOLS = new Set(['select', 'matView', 'winActive', 'lineStyle', 'trace']);

const Tool = ({ name, w, h }: { name: string; w?: number; h?: number }) => (
  <ToolButton $active={ACTIVE_TOOLS.has(name)} $w={w} $h={h}>
    <Glyph viewBox="0 0 24 24">{Icons[name]}</Glyph>
  </ToolButton>
);

const Group = ({ names, col, mt, ml }: { names: string[]; col?: boolean; mt?: number; ml?: number }) => (
  <ToolGroup $col={col} $mt={mt} $ml={ml}>
    {names.map((n) => (
      <Tool key={n} name={n} />
    ))}
  </ToolGroup>
);

const TOP_LEFT = [
  ['new', 'open', 'mat', 'save', 'card'],
  ['print', 'send'],
  ['copy', 'paste', 'cut'],
  ['undo', 'redo'],
  ['hand', 'zoomIn', 'zoomOut', 'zoomSel', 'pan', 'fit'],
];
const SECOND_LEFT = [
  ['group', 'ungroup'],
  ['weld', 'overlap', 'front'],
  ['cubes', 'cross'],
  ['arrFront', 'arrBack'],
  ['blob', 'offset'],
  ['mirror'],
  ['book3d'],
];
const TOP_RIGHT = [
  ['bucket', 'gradient', 'pattern'],
  ['pentFill', 'pentLines', 'pentDots', 'pentKnife', 'pentArrow'],
  ['lineColor', 'lineStyle'],
  ['fontA'],
  ['move', 'rotate', 'scale', 'shear', 'align', 'flower', 'letterN'],
  ['matM', 'matY'],
  ['pageFlip', 'crop', 'textBox', 'grid'],
  ['spiral', 'dots'],
];
const LEFT_TOOLS: { names: string[]; mt?: number }[] = [
  { names: ['select', 'node'] },
  { names: ['line', 'rect', 'rrect', 'oval'] },
  { names: ['bezier', 'curve', 'pencilC', 'pencilO'] },
  { names: ['arc', 'polygon'] },
  { names: ['textTool'] },
  { names: ['eraser', 'knife'] },
  { names: ['matView', 'book', 'sLogo'], mt: 17 },
  { names: ['winActive', 'winSplit'], mt: 17 },
];

const STEP = 115 / 15;

function HorizontalRuler() {
  const width = 1468;
  const zero = 382;
  const ticks: React.ReactNode[] = [];
  for (let i = -49; i < 150; i += 1) {
    const x = zero + i * STEP;
    if (x < 0 || x > 1449) continue;
    const len = i % 15 === 0 ? 11 : i % 3 === 0 ? 8 : 4;
    ticks.push(<line key={i} x1={x} x2={x} y1={19} y2={19 - len} stroke="#a6a6a6" />);
  }
  return (
    <RulerSvg width={width} height={19}>
      <rect width={width} height={19} fill="#f0f0f0" />
      <rect x={zero} width={703} height={19} fill="#c9c9c9" />
      {ticks}
      <line x1={1134} x2={1134} y1={0} y2={19} stroke="#888" />
      {[-100, -50, 0, 50, 100, 150, 200, 250, 300, 350, 400].map((v) => (
        <text key={v} x={zero + v * 2.3} y={10} fontSize="10" fill="#777" textAnchor="middle" fontFamily={UI_FONT}>
          {v}
        </text>
      ))}
    </RulerSvg>
  );
}

function VerticalRuler() {
  const height = 854;
  const zero = 65;
  const ticks: React.ReactNode[] = [];
  for (let i = -8; i < 104; i += 1) {
    const y = zero + i * STEP;
    const len = i % 15 === 0 ? 11 : i % 3 === 0 ? 8 : 4;
    ticks.push(<line key={i} x1={0} x2={len} y1={y} y2={y} stroke="#a6a6a6" />);
  }
  return (
    <RulerSvg width={19} height={height}>
      <rect width={19} height={height} fill="#f0f0f0" />
      <rect y={zero} width={19} height={703} fill="#c9c9c9" />
      {ticks}
      <line x1={0} x2={19} y1={664} y2={664} stroke="#888" />
      {[0, 50, 100, 150, 200, 250, 300].map((v) => (
        <text
          key={v}
          x={12}
          y={zero + v * 2.3}
          fontSize="10"
          fill="#666"
          textAnchor="middle"
          fontFamily={UI_FONT}
          style={{ writingMode: 'vertical-rl' }}
        >
          {v}
        </text>
      ))}
    </RulerSvg>
  );
}

const HOOK_Y = [69, 126, 184, 241, 297, 355, 413, 469, 528];

function PaperShapes() {
  let outline = 'M31.500 29.500H441.500V569H31.500';
  HOOK_Y.slice()
    .reverse()
    .forEach((y) => {
      outline += `V${y + 2.5}H48.500c1 2 1 3 1 4.500 2.500 0 5.500-3 5.500-7s-3-7-5.500-7c0 1.500 0 2.500-1 4.500H31.500`;
    });
  outline += 'V29.500';
  return (
    <PaperDrawing viewBox="0 1 702 702">
      <g fill="none" stroke="#ff8a90" strokeWidth="1">
        <path d={outline} />
        <path d="M31.500 569H118M245.500 246.500H441.500L474.500 270V545.500L442 568.500L416.500 601.500H141.500L118 569.500V352z" />
        <path d="M441.500 246.500V568.500L118 569.500" stroke="#ff5a66" strokeDasharray="6 2" />
      </g>
    </PaperDrawing>
  );
}

const TAB_NAMES = ['Sin título-1.studio3', 'Sin título-3.studio3', 'Sin título-4.studio3', 'Sin título-5.studio3', 'Sin título-6.studio3'];

const DASHES = [undefined, '6 2.2', '12 8', '22 18', '14.300 1.700'];
const DASH_WIDTH = [274, 270, 272, 262, 270];

const VERTEX_ICONS = [
  <path key="v" d="M2 0h20v20H2z" fill="#777" />,
  <path key="b" d="M2 0h20v20H8l-6-6z" fill="#777" />,
  <path key="r" d="M2 0h20v20H10a8 8 0 0 1-8-8z" fill="#777" />,
];

const CAP_ICONS = [
  <path key="a" d="M6 6h18v12H6z" fill="#444" />,
  <g key="b">
    <rect x=".5" y="6.500" width="6" height="11" fill="#fff" stroke="#999" />
    <path d="M6 6h18v12H6z" fill="#444" />
  </g>,
  <g key="c">
    <path d="M6 6.500a5.500 5.500 0 0 0 0 11" fill="#fff" stroke="#999" />
    <path d="M6 6h18v12H6z" fill="#444" />
  </g>,
];

const ArrowUp = () => (
  <Arrow viewBox="0 0 12 12">
    <path d="M6 1l5.500 10H.5z" fill="#fff" />
  </Arrow>
);
const ArrowDown = () => (
  <Arrow viewBox="0 0 12 12">
    <path d="M6 11L.5 1h11z" fill="#fff" />
  </Arrow>
);
const ArrowLeft = () => (
  <Arrow viewBox="0 0 12 12">
    <path d="M2 6l9-5.500v11z" fill="#fff" />
  </Arrow>
);
const ArrowRight = () => (
  <Arrow viewBox="0 0 12 12">
    <path d="M10 6L1 .5v11z" fill="#fff" />
  </Arrow>
);

export default function App() {
  return (
    <Window>
      <Global />
      <TitleBar>
        <TitleLogo viewBox="0 0 24 24">{Icons.sLogo}</TitleLogo>
        <TitleText>Silhouette Studio Business Edition: Sin título-6.studio3</TitleText>
        <GlassBlobs>
          {[33, 27, 23, 45, 35].map((w) => (
            <GlassBlob key={w} $w={w} />
          ))}
        </GlassBlobs>
        <WindowButtons>
          <WindowButton $w={27}>
            <MinGlyph />
          </WindowButton>
          <WindowButton $w={26}>
            <MaxGlyph />
          </WindowButton>
          <WindowButton $w={48} $close>
            X
          </WindowButton>
        </WindowButtons>
      </TitleBar>

      <Client>
        <MenuBar>
          {['Archivo', 'Editar', 'Ver', 'Silhouette', 'Objeto', 'Ayuda'].map((m) => (
            <span key={m}>{m}</span>
          ))}
        </MenuBar>

        <ToolbarArea>
          <ToolRows>
            <ToolRow>
              {TOP_LEFT.map((g) => (
                <Group key={g[0]} names={g} />
              ))}
            </ToolRow>
            <ToolRow>
              {SECOND_LEFT.map((g) => (
                <Group key={g[0]} names={g} />
              ))}
            </ToolRow>
          </ToolRows>
          <ToolRight>
            <ToolRows>
              <ToolRow>
                {TOP_RIGHT.map((g) => (
                  <Group key={g[0]} names={g} />
                ))}
              </ToolRow>
              <ToolRow $end>
                <Group names={['trace', 'traceRed']} />
                <Group names={['pen', 'sendSmall']} ml={3} />
              </ToolRow>
            </ToolRows>
            <ToolGroup $col>
              <Tool name="gear" w={26} h={33} />
              <Tool name="refresh" w={26} h={33} />
            </ToolGroup>
          </ToolRight>
        </ToolbarArea>

        <Workspace>
          <ToolColumn>
            {LEFT_TOOLS.map((g) => (
              <Group key={g.names[0]} names={g.names} col mt={g.mt} />
            ))}
          </ToolColumn>

          <Editor>
            <EditorTop>
              <Stage>
                <HorizontalRuler />
                <Coords>32,602 , 25,961</Coords>
                <StageBody>
                  <DesignColumn>
                    <Surface>
                      <ViewBadge>VISTA DE DISEÑO</ViewBadge>
                      <Mat>
                        <MatArrow viewBox="0 0 36 27">
                          <path d="M18 0l18 17H27v10H9V17H0z" fill="#000" />
                        </MatArrow>
                        <Paper>
                          <PaperShapes />
                        </Paper>
                      </Mat>
                    </Surface>
                    <TabStrip>
                      {TAB_NAMES.map((name, i) => {
                        const active = i === TAB_NAMES.length - 1;
                        return (
                          <Tab key={name} $active={active}>
                            <TabShape width="144" height="24" viewBox="0 0 144 24">
                              <path
                                d="M.5 24L8 4Q10 .5 14 .5H128Q132 .5 134 4L143.500 24"
                                fill={active ? '#fff' : CYAN}
                                stroke={CYAN}
                              />
                            </TabShape>
                            {name}
                            <TabClose $active={active}>X</TabClose>
                          </Tab>
                        );
                      })}
                    </TabStrip>
                  </DesignColumn>
                  <VerticalRuler />
                </StageBody>
              </Stage>
              <VScroll>
                <CollapseBtn>»</CollapseBtn>
                <ScrollBtn>
                  <ArrowUp />
                </ScrollBtn>
                <Track $h={276} />
                <Thumb $h={107} />
                <Track $flex={1} />
                <ScrollBtn>
                  <ArrowDown />
                </ScrollBtn>
              </VScroll>
            </EditorTop>
            <HScroll>
              <ScrollBtn>
                <ArrowLeft />
              </ScrollBtn>
              <Track $w={447} />
              <Thumb $w={280} />
              <Track $flex={1} />
              <ScrollBtn>
                <ArrowRight />
              </ScrollBtn>
            </HScroll>
          </Editor>

          <SidePanel>
            <PanelTitle>ESTILO DE TRAZO</PanelTitle>
            <TitleRule />
            <Inner>
              <SectionHead $h={15}>Estilo de trazo</SectionHead>
              <StyleList>
                <StyleRows>
                  {DASHES.map((d, i) => (
                    <StyleRow key={DASH_WIDTH[i] + i} $active={i === 2}>
                      <svg width={DASH_WIDTH[i]} height="2">
                        <line x1="0" x2={DASH_WIDTH[i]} y1="1" y2="1" stroke="#444" strokeWidth="2" strokeDasharray={d} />
                      </svg>
                    </StyleRow>
                  ))}
                </StyleRows>
                <ListScroll>
                  <ListArrow>
                    <ArrowUp />
                  </ListArrow>
                  <Thumb $h={86} />
                  <Track $flex={1} />
                  <ListArrow>
                    <ArrowDown />
                  </ListArrow>
                </ListScroll>
              </StyleList>

              <SectionHead>Grosor de trazo</SectionHead>
              <WeightRow>
                <WeightLabel>Grosor de trazo</WeightLabel>
                <SliderBox>
                  <SliderNeedle />
                  <SliderHandle />
                </SliderBox>
                <NumberBox>0,0</NumberBox>
                <Spinner>
                  <SpinUp />
                  <SpinDown />
                </Spinner>
                <UnitText>pt</UnitText>
                <UnitButton>pt</UnitButton>
              </WeightRow>

              <SectionHead>Estilo de vértice</SectionHead>
              <OptionBox>
                {['Vértice', 'Biselado', 'Redondeado'].map((t, i) => (
                  <Option key={t} $h={35.3}>
                    <OptionIcon viewBox="0 0 24 20" preserveAspectRatio="xMidYMid meet">
                      {VERTEX_ICONS[i]}
                      <path d="M10 0h12v13H10z" fill={CYAN} />
                    </OptionIcon>
                    {t}
                  </Option>
                ))}
              </OptionBox>

              <SectionHead>Estilo de remate</SectionHead>
              <OptionBox>
                {['Recto', 'Cuadrado', 'Redondeado'].map((t, i) => (
                  <Option key={t} $h={35.3}>
                    <OptionIcon viewBox="0 0 24 24">{CAP_ICONS[i]}</OptionIcon>
                    {t}
                  </Option>
                ))}
              </OptionBox>

              <SectionHead>Posición</SectionHead>
              <OptionBox>
                <Option $active $h={35}>
                  <OptionIcon viewBox="0 0 24 24">
                    <rect x="2" y="1" width="21" height="22" rx="4" fill="#047f9a" />
                    <rect x="7" y="6" width="11" height="12" fill={CYAN} />
                  </OptionIcon>
                  Delante
                </Option>
                <Option $h={35}>
                  <OptionIcon viewBox="0 0 24 24">
                    <rect x="3" y="2" width="19" height="20" rx="2" fill={CYAN} stroke="#444" strokeWidth="2" />
                  </OptionIcon>
                  Detrás
                </Option>
              </OptionBox>
              <PrintRow>
                <CheckBox />
                Imprimir líneas formas selec.
              </PrintRow>
            </Inner>
          </SidePanel>
        </Workspace>
      </Client>
    </Window>
  );
}
